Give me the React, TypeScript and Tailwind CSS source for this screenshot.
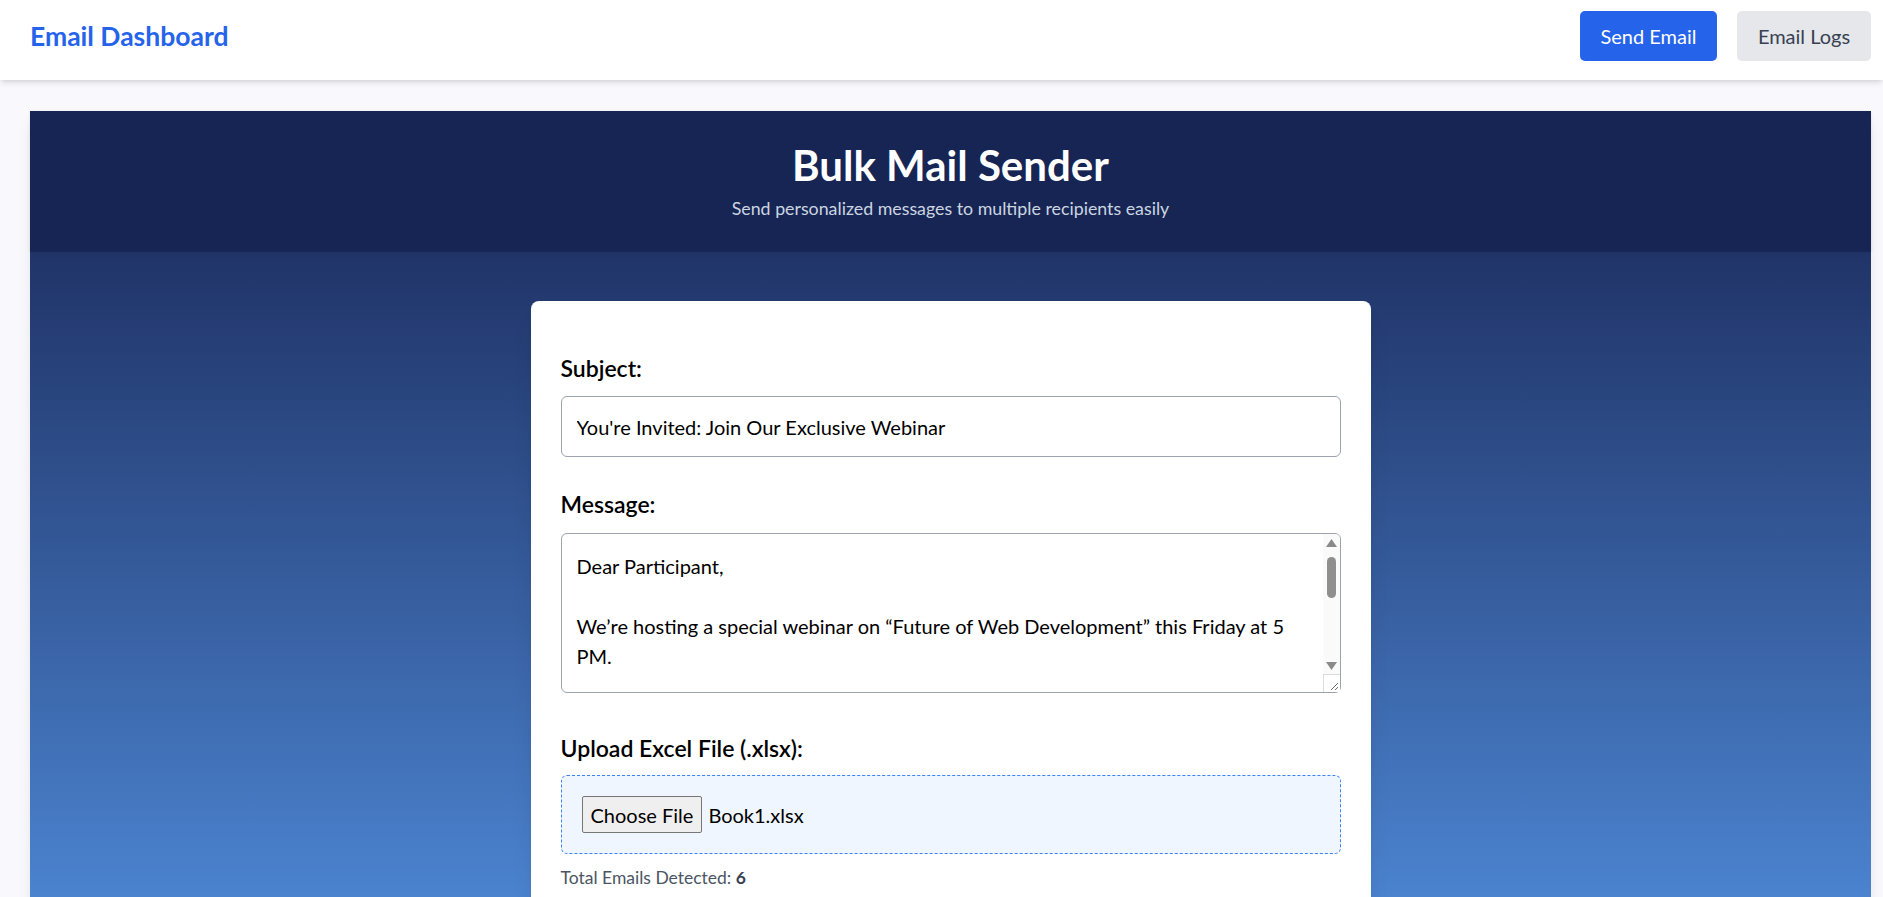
import { useState } from "react";

const startMessage = `Dear Participant,

We’re hosting a special webinar on “Future of Web Development” this Friday at 5 PM.

In this session you will learn about the latest trends, tools and frameworks shaping the web.

Date: Friday
Time: 5:00 PM
Platform: Zoom

Seats are limited, so make sure to register early.

Best regards,
The Events Team`;

export default function App() {
  const [subject, setSubject] = useState("You're Invited: Join Our Exclusive Webinar");
  const [message, setMessage] = useState(startMessage);

  return (
    <div className="min-h-screen bg-[#f8f8fd] font-['Lato',sans-serif] text-black">
      {/* Navbar */}
      <nav className="relative z-10 h-[80px] bg-white shadow-md flex justify-between items-start pl-[30px] pr-[12px] pt-[11px]">
        <div className="h-[50px] flex items-center">
          <h1 className="text-[26.5px] font-bold text-[#2563eb] leading-none">Email Dashboard</h1>
        </div>
        <div className="flex gap-[20px]">
          <button className="w-[137px] h-[50px] rounded-[5px] bg-[#2563eb] text-white text-[20px]">Send Email</button>
          <button className="w-[134px] h-[50px] rounded-[5px] bg-[#e5e7eb] text-[#374151] text-[20px]">Email Logs</button>
        </div>
      </nav>

      <div className="pl-[30px] pr-[12px] pt-[31px]">
        <section className="shadow-lg bg-[linear-gradient(180deg,#172554_0px,#172554_140px,#203468_141px,#4b83cf_786px,#5b97e2_1100px)]">
          {/* Header */}
          <header className="h-[140px] bg-[#172554] flex flex-col items-center pt-[27px] shadow-sm">
            <h2 className="text-[42px] font-bold text-white leading-[54px]">Bulk Mail Sender</h2>
            <p className="text-[17.8px] text-[#cbd5e1] leading-[27px] mt-[3px]">Send personalized messages to multiple recipients easily</p>
          </header>

          <div className="flex justify-center pt-[50px] pb-[60px]">
            <div className="w-[840px] bg-white rounded-lg pt-[52px] px-[30px] pb-[40px] shadow-xl">
              {/* Subject */}
              <label className="block text-[23px] font-semibold leading-[30px] mb-[13px]">Subject:</label>
              <input
                value={subject}
                onChange={(e) => setSubject(e.target.value)}
                className="block w-full h-[61px] border border-[#9ca3af] rounded-[6px] px-[15px] text-[20px] outline-none"
              />

              {/* Message */}
              <label className="block text-[23px] font-semibold leading-[30px] mt-[32px] mb-[14px]">Message:</label>
              <div className="relative">
                <textarea
                  value={message}
                  onChange={(e) => setMessage(e.target.value)}
                  className="block w-full h-[160px] resize-none border border-[#9ca3af] rounded-[6px] pl-[15px] pr-[32px] py-[17px] text-[20px] leading-[30px] outline-none"
                />
                {/* scrollbar */}
                <div className="absolute top-[1px] right-[1px] bottom-[1px] w-[17px] bg-[#fafafa] rounded-tr-[5px] rounded-br-[5px] flex flex-col pointer-events-none">
                  <div className="h-[17px] flex items-center justify-center">
                    <svg width="11" height="8" viewBox="0 0 11 8"><polygon points="5.5,0 11,8 0,8" fill="#8a8a8a" /></svg>
                  </div>
                  <div className="flex-1 px-[4px] pt-[6px]">
                    <div className="h-[41px] w-full rounded-full bg-[#8f8f8f]" />
                  </div>
                  <div className="h-[17px] flex items-center justify-center">
                    <svg width="11" height="8" viewBox="0 0 11 8"><polygon points="0,0 11,0 5.5,8" fill="#8a8a8a" /></svg>
                  </div>
                  <div className="h-[18px] border-t border-l border-[#dcdcdc] bg-white flex items-end justify-end p-[2px]">
                    <svg width="9" height="9" viewBox="0 0 9 9">
                      <line x1="2" y1="9" x2="9" y2="2" stroke="#6b6b6b" strokeWidth="1" />
                      <line x1="6" y1="9" x2="9" y2="6" stroke="#6b6b6b" strokeWidth="1" />
                    </svg>
                  </div>
                </div>
              </div>

              {/* Upload */}
              <label className="block text-[23px] font-semibold leading-[30px] mt-[40px] mb-[12px]">Upload Excel File (.xlsx):</label>
              <div className="border border-dashed border-[#3b82f6] bg-[#eff6ff] rounded-[6px] px-[20px] py-[20px] flex items-center">
                <button className="h-[37px] px-[8px] bg-[#efefef] border border-[#767676] rounded-[2px] text-[20px] text-black">Choose File</button>
                <span className="ml-[6px] text-[20px]">Book1.xlsx</span>
              </div>
              <p className="mt-[11px] text-[17.5px] leading-[26px] text-[#4b5563]">
                Total Emails Detected: <span className="font-bold text-[#374151]">6</span>
              </p>

              <button className="mt-[30px] w-full h-[56px] rounded-[6px] bg-[#2563eb] text-white text-[22px] font-semibold">Send Emails</button>
            </div>
          </div>
        </section>
      </div>
    </div>
  );
}
